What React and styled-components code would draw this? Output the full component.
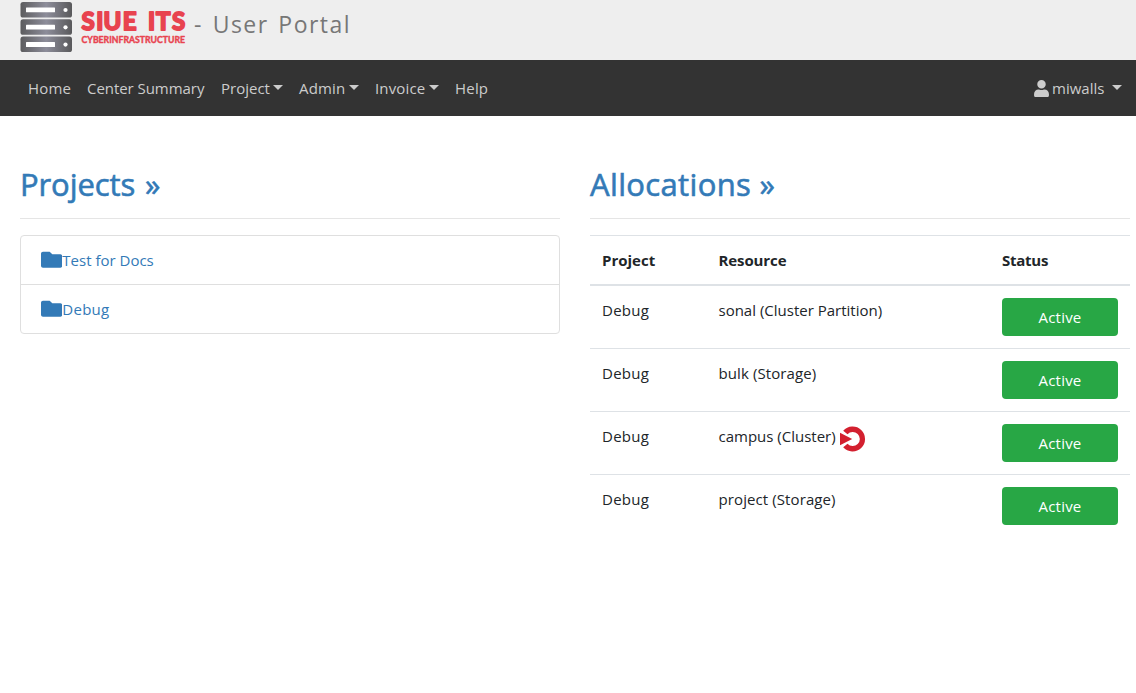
import React from "react";
import styled, { createGlobalStyle } from "styled-components";
import { FaFolder, FaUser } from "react-icons/fa";

const GlobalStyle = createGlobalStyle`
  *, *::before, *::after { box-sizing: border-box; }
  body {
    margin: 0;
    background: #fff;
    color: #212529;
    font-family: "Open Sans", "Noto Sans", sans-serif;
    font-size: 15px;
    line-height: 24px;
  }
`;

const Header = styled.header`
  height: 60px;
  padding-left: 20px;
  display: flex;
  align-items: flex-start;
  background: #eee;
`;

const LogoSvg = styled.svg`
  display: block;
  flex: none;
`;

const PortalTitle = styled.div`
  padding: 6px 0 0 7px;
  color: #777;
  font-size: 23px;
  line-height: 36px;
  letter-spacing: 1.45px;
  word-spacing: 2.4px;
  white-space: nowrap;
`;

const NavBar = styled.nav`
  height: 56px;
  padding: 0 14px 0 28px;
  display: flex;
  align-items: center;
  gap: 16px;
  background: #333;
`;

const NavLink = styled.a`
  width: ${(p) => p.$width}px;
  flex: none;
  display: flex;
  align-items: center;
  justify-content: space-between;
  color: #ccc;
  letter-spacing: ${(p) => p.$track || 0}px;
  text-decoration: none;
  white-space: nowrap;
`;

const Caret = styled.span`
  margin-bottom: 2px;
  border: 5px solid transparent;
  border-top-color: #ccc;
  border-bottom: 0;
`;

const UserMenu = styled(NavLink)`
  margin-left: auto;
  justify-content: flex-start;

  svg { margin-right: 2px; }
  ${Caret} { margin-left: auto; }
`;

const Columns = styled.main`
  display: grid;
  grid-template-columns: 540px 540px;
  column-gap: 30px;
  padding: 49px 0 0 20px;
`;

const Heading = styled.h2`
  height: 54px;
  margin: 0 0 16px;
  border-bottom: 1px solid #e5e5e5;
  color: #337ab7;
  font-size: 31px;
  font-weight: 400;
  line-height: 38px;
  letter-spacing: ${(p) => p.$track || 0}px;
  -webkit-text-stroke: 0.6px #337ab7;
  word-spacing: ${(p) => p.$gap || 0}px;
  white-space: nowrap;
`;

const ProjectList = styled.ul`
  margin: 0;
  padding: 0;
  list-style: none;
  border: 1px solid #dfdfdf;
  border-radius: 4px;
`;

const ProjectItem = styled.li`
  height: ${(p) => (p.$last ? 48 : 49)}px;
  padding: 0 20px;
  display: flex;
  align-items: center;
  border-bottom: ${(p) => (p.$last ? 0 : 1)}px solid #dfdfdf;
  color: #337ab7;
  letter-spacing: ${(p) => p.$track || 0}px;

  svg { flex: none; width: 21.33px; height: 21.33px; }
`;

const Table = styled.table`
  width: 100%;
  table-layout: fixed;
  border-collapse: separate;
  border-spacing: 0;
`;

const HeadCell = styled.th`
  width: ${(p) => p.$width}px;
  height: 51px;
  padding: 0 12px;
  border-top: 1px solid #dee2e6;
  border-bottom: 2px solid #dee2e6;
  text-align: left;
  font-weight: 700;
  letter-spacing: ${(p) => p.$track || 0}px;
`;

const Cell = styled.td`
  height: ${(p) => (p.$first ? 62 : 63)}px;
  padding: 12px 12px 0;
  border-top: ${(p) => (p.$first ? 0 : 1)}px solid #dee2e6;
  vertical-align: top;
  letter-spacing: ${(p) => p.$track || 0}px;
`;

const Resource = styled.div`
  height: 24px;
  display: flex;
  align-items: center;
  gap: 4px;
  white-space: nowrap;

  svg { flex: none; margin-top: 5px; }
`;

const Status = styled.span`
  width: 116px;
  height: 38px;
  display: flex;
  align-items: center;
  justify-content: center;
  border-radius: 4px;
  background: #28a745;
  color: #fff;
  letter-spacing: 0.2px;
`;

const Logo = () => (
  <LogoSvg width="167" height="56" viewBox="20 0 167 56" role="img" aria-label="SIUE ITS Cyberinfrastructure">
    <defs>
      <linearGradient id="metal" x1="0" x2="1">
        <stop offset="0" stopColor="#5c5c5e" />
        <stop offset="0.5" stopColor="#8d8d9a" />
        <stop offset="1" stopColor="#59595b" />
      </linearGradient>
    </defs>
    {[2, 19.3, 36.6].map((y) => (
      <g key={y}>
        <rect x="20.5" y={y} width="51.5" height="15.5" rx="2.6" fill="url(#metal)" />
        <rect x="26" y={y + 5.5} width="29" height="4.8" rx="0.5" fill="#fff" />
        <circle cx="65.5" cy={y + 8} r="2.1" fill="#fff" />
      </g>
    ))}
    <g fill="#e8434f" stroke="#e8434f" strokeLinejoin="round" fontFamily="Lato, sans-serif" fontWeight="700">
      <text x="88 99.8 112.3 129.6" y="29.6" fontSize="24" strokeWidth="1.9" textAnchor="middle">SIUE</text>
      <text x="151.5 163.3 178.6" y="29.6" fontSize="24" strokeWidth="1.9" textAnchor="middle">ITS</text>
      <text x="81.5" y="42.6" fontSize="8.8" strokeWidth="0.4" textLength="103.5" lengthAdjust="spacingAndGlyphs">CYBERINFRASTRUCTURE</text>
    </g>
  </LogoSvg>
);

const CampusIcon = () => (
  <svg width="26" height="26" viewBox="0 0 26 26" fill="#d3202f">
    <path d="M3.2 4.7A12.5 12.5 0 1 1 3.2 21.3L7.5 17.8A7.1 7.1 0 1 0 7.5 8.2Z" />
    <path d="M0 6.7 12.2 13 0 19.3Z" />
  </svg>
);

const links = [
  { label: "Home", width: 43, track: 0.2 },
  { label: "Center Summary", width: 118, track: -0.05 },
  { label: "Project", width: 62, track: 0, menu: true },
  { label: "Admin", width: 60, track: 0.15, menu: true },
  { label: "Invoice", width: 64, track: 0.15, menu: true },
  { label: "Help", width: 34, track: 0.2 },
];

const allocations = [
  { resource: "sonal (Cluster Partition)" },
  { resource: "bulk (Storage)", track: 0.1 },
  { resource: "campus (Cluster)", icon: true },
  { resource: "project (Storage)", track: 0.1 },
];

export default function App() {
  return (
    <>
      <GlobalStyle />
      <Header>
        <Logo />
        <PortalTitle>- User Portal</PortalTitle>
      </Header>
      <NavBar>
        {links.map((l) => (
          <NavLink key={l.label} $width={l.width} $track={l.track}>
            {l.label}
            {l.menu && <Caret />}
          </NavLink>
        ))}
        <UserMenu $width={89}>
          <FaUser size={17} />
          miwalls
          <Caret />
        </UserMenu>
      </NavBar>
      <Columns>
        <section>
          <Heading $track={-0.1} $gap={2}>Projects »</Heading>
          <ProjectList>
            <ProjectItem><FaFolder />Test for Docs</ProjectItem>
            <ProjectItem $last $track={0.25}><FaFolder />Debug</ProjectItem>
          </ProjectList>
        </section>
        <section>
          <Heading $track={0.35}>Allocations »</Heading>
          <Table>
            <thead>
              <tr>
                <HeadCell $width={116.5}>Project</HeadCell>
                <HeadCell $width={283.5} $track={-0.1}>Resource</HeadCell>
                <HeadCell $width={140} $track={-0.25}>Status</HeadCell>
              </tr>
            </thead>
            <tbody>
              {allocations.map((a, i) => (
                <tr key={a.resource}>
                  <Cell $first={i === 0} $track={0.25}>Debug</Cell>
                  <Cell $first={i === 0} $track={a.track}>
                    <Resource>{a.resource}{a.icon && <CampusIcon />}</Resource>
                  </Cell>
                  <Cell $first={i === 0}><Status>Active</Status></Cell>
                </tr>
              ))}
            </tbody>
          </Table>
        </section>
      </Columns>
    </>
  );
}
